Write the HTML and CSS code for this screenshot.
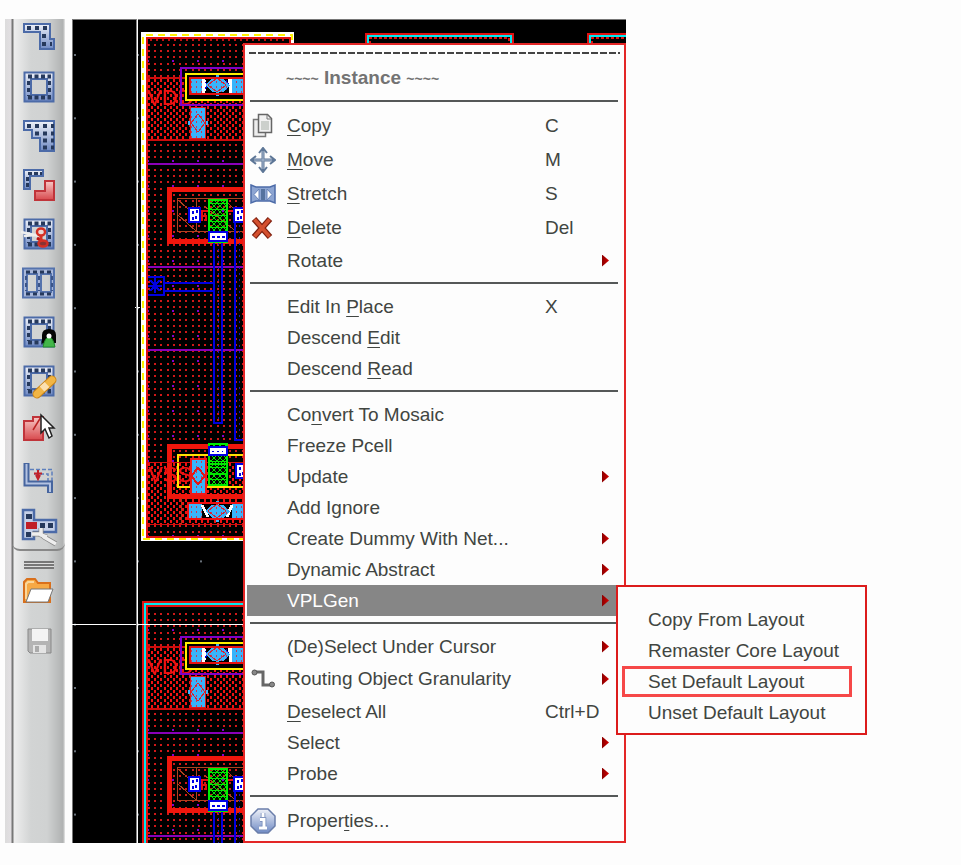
FILE: index.html
```html
<!DOCTYPE html>
<html lang="en">
<head>
<meta charset="utf-8">
<title>Layout Editor</title>
<link rel="stylesheet" href="styles.css">
</head>
<body>
<svg class="defs" aria-hidden="true">
  <defs>
    <linearGradient id="steel" x1="0" y1="0" x2="0" y2="1"><stop offset="0" stop-color="#eef1f8"/><stop offset="1" stop-color="#6f8ac4"/></linearGradient>
    <linearGradient id="rose" x1="0" y1="0" x2="0" y2="1"><stop offset="0" stop-color="#f7c9c6"/><stop offset="1" stop-color="#d8494d"/></linearGradient>
    <g id="ring">
      <path d="M1.500 1.500h29v29h-29zM8 8v16h16V8z" fill="url(#steel)" fill-rule="evenodd" stroke="#4c6ba8" stroke-width="2"/>
      <path d="M5 5.500h23M5 26.500h23" stroke="#26395c" stroke-width="4" stroke-dasharray="4 2.500"/>
      <path d="M5.500 10v15M26.500 10v15" stroke="#26395c" stroke-width="3" stroke-dasharray="4 3"/>
    </g>
  </defs>
</svg>
<main class="editor">
  <nav class="toolbar" aria-label="Layout tools">
    <div class="tools">
      <button class="tool" aria-label="Create path"><svg viewBox="0 0 32 32"><path d="M1 2h26v15h4v10H17V10H1z" fill="url(#steel)" stroke="#4c6ba8" stroke-width="2"/><path d="M4 6h22M19 14h4M19 22h10" stroke="#26395c" stroke-width="4" stroke-dasharray="4 4"/></svg></button>
      <button class="tool" aria-label="Create guard ring"><svg viewBox="0 0 32 32"><use href="#ring"/></svg></button>
      <button class="tool" aria-label="Create polygon"><svg viewBox="0 0 32 32"><path d="M1 1h30v30H17V18H9V10H1z" fill="url(#steel)" stroke="#4c6ba8" stroke-width="2"/><path d="M4 6h27M12 13.500h19M20 20.500h11M20 27.500h11" stroke="#26395c" stroke-width="4" stroke-dasharray="4 4"/></svg></button>
      <button class="tool" aria-label="Merge shapes"><svg viewBox="0 0 32 32"><path d="M1 1h19v6H7v13H1z" fill="url(#steel)" stroke="#4c6ba8" stroke-width="2"/><path d="M5 4.500h14M4.500 8v12" stroke="#26395c" stroke-width="3" stroke-dasharray="4 2"/><path d="M12 22h10V12h9v19H12z" fill="url(#rose)" stroke="#c0343a" stroke-width="2"/></svg></button>
      <button class="tool" aria-label="Chop"><svg viewBox="0 0 32 32"><use href="#ring"/><path d="M-2 14l18 4M1 18l12-1" stroke="#eee" stroke-width="2.500"/><path d="M14 20l5 3" stroke="#b11" stroke-width="3"/><ellipse cx="18" cy="14" rx="4" ry="3.500" fill="#ead9d6" stroke="#d43025" stroke-width="2.500"/><path d="M18 18v7" stroke="#d43025" stroke-width="3"/><ellipse cx="20" cy="25.500" rx="4.500" ry="3" fill="#833" stroke="#d43025" stroke-width="2.500"/></svg></button>
      <button class="tool" aria-label="Split"><svg viewBox="0 0 32 32"><path d="M0 1.500h31v29H0zM4 7v18h10V7zM18 7v18h10V7z" fill="#a9b8da" fill-rule="evenodd" stroke="#5573ad" stroke-width="2"/><path d="M3 5h27M3 27h27" stroke="#26395c" stroke-width="3" stroke-dasharray="4 3"/><path d="M3 9v15M16 9v15M29 9v15" stroke="#3c5588" stroke-width="2" stroke-dasharray="4 3"/></svg></button>
      <button class="tool" aria-label="Attach net"><svg viewBox="0 0 32 32"><use href="#ring"/><path d="M19 27V19q0-6 7-6t7 6v8z" fill="#050505"/><path d="M20 31q2-10 6-10t6 10z" fill="#43b649" stroke="#238a2c"/><circle cx="26" cy="20" r="2.500" fill="#fff"/></svg></button>
      <button class="tool" aria-label="Repair"><svg viewBox="0 0 32 32"><use href="#ring"/><path d="M14 29L29 15" stroke="#c98318" stroke-width="9" stroke-linecap="round"/><path d="M14 29L29 15" stroke="#f1b544" stroke-width="7" stroke-linecap="round"/><path d="M19 24l5-4.500" stroke="#fbe0b0" stroke-width="7"/></svg></button>
      <button class="tool" aria-label="Select shape"><svg viewBox="0 0 32 32"><path d="M1 7h9V3h10v23H1z" fill="url(#rose)" stroke="#c0343a" stroke-width="2"/><path d="M10 16L18 3" stroke="#b22" stroke-width="1.500"/><path d="M18 1v18l4-4 4 9 3-2-3-8h5z" fill="#fff" stroke="#222" stroke-width="1.500"/></svg></button>
      <button class="tool" aria-label="Move edge"><svg viewBox="0 0 32 32"><path d="M7 6.500h22V20M11 11h14v9" fill="none" stroke="#5d7fbd" stroke-width="1.500" stroke-dasharray="4 2"/><path d="M3.500 0v20.500H27V30" fill="none" stroke="#46659f" stroke-width="6"/><path d="M3.500 1v19.500H27V29" fill="none" stroke="#b4c3e2" stroke-width="2"/><path d="M15 7v8M11 10.500h8M13 12l2 4 2-4" stroke="#c2222a" stroke-width="2" fill="none"/></svg></button>
      <button class="tool" aria-label="Fix routing"><svg viewBox="0 0 32 32"><path d="M0-2h11V8h22v12H11v7H0z" fill="#c5d0e8" stroke="#4c6ba8" stroke-width="2.500"/><path d="M3 2h6v5H3zM3 20h5v5H3zM17 11h5v5h-5zM25 11h5v5h-5z" fill="#26395c"/><path d="M3 10h11v7H3z" fill="#c01f27"/><path d="M9 22h9l3 3 12 7M18 16v7l6 2" fill="none" stroke="#888" stroke-width="5"/><path d="M9 22h9l3 3 12 7M18 16v7l6 2" fill="none" stroke="#eee" stroke-width="3.500"/></svg></button>
    </div>
    <div class="files">
      <span class="grip"></span>
      <button class="tool" aria-label="Open"><svg viewBox="0 0 32 32"><path d="M1 27V7l3-3h8l3 4h12v19z" fill="#f6a945" stroke="#d9701c" stroke-width="2"/><path d="M3 24V9l2-2h6" fill="none" stroke="#fbd79a" stroke-width="2"/><path d="M8 14h22l-5 13H3z" fill="#fff" stroke="#777"/></svg></button>
      <button class="tool" aria-label="Save"><svg viewBox="0 0 32 32"><path d="M5 4h23v24H7l-2-2z" fill="#b4b4b4" stroke="#888"/><path d="M9 4h16v12H9z" fill="#f4f4f4"/><path d="M10 20h13v8H10z" fill="#e4e4e4"/><path d="M12 21h4v6h-4z" fill="#aaa"/></svg></button>
    </div>
  </nav>

  <section class="canvas" aria-label="Layout canvas">
    <svg class="artwork" viewBox="72 19 554 824" preserveAspectRatio="xMinYMin slice" shape-rendering="crispEdges">
      <defs>
        <pattern id="dots" x="148" y="44" width="25" height="25" patternUnits="userSpaceOnUse"><path d="M0 0h2v2H0zM6 0h2v2H6zM12 0h2v2h-2zM19 0h2v2h-2zM0 6h2v2H0zM6 6h2v2H6zM12 6h2v2h-2zM19 6h2v2h-2zM0 12h2v2H0zM6 12h2v2H6zM12 12h2v2h-2zM19 12h2v2h-2zM0 19h2v2H0zM6 19h2v2H6zM12 19h2v2h-2zM19 19h2v2h-2z" fill="#d01818"/></pattern>
        <pattern id="violet" x="147" y="60" width="25" height="25" patternUnits="userSpaceOnUse"><rect width="2" height="2" fill="#8200cc"/></pattern>
        <pattern id="dense" x="148" y="79" width="25" height="6" patternUnits="userSpaceOnUse"><path d="M0 0h2v3H0zM6 0h2v3H6zM12 0h2v3h-2zM19 0h2v3h-2zM3 3h2v3H3zM9 3h2v3H9zM16 3h2v3h-2zM22 3h2v3h-2z" fill="#f01212"/></pattern>
        <pattern id="speck" width="5" height="5" patternUnits="userSpaceOnUse"><rect width="5" height="5" fill="#38b4fb"/><rect x="1" y="1" width="1" height="2" fill="#c43a5a"/></pattern>
        <pattern id="mesh" x="208" y="200" width="6" height="6" patternUnits="userSpaceOnUse"><path d="M0 0l6 6M6 0L0 6M0 3h6" stroke="#00e800" stroke-width="1"/></pattern>
        <pattern id="stars" width="63" height="63.300" x="74" y="54" patternUnits="userSpaceOnUse"><rect width="2" height="2" fill="#69717a"/></pattern>
        <g id="contact"><rect x="189" y="208" width="11" height="14" fill="#fff" stroke="#0000e8" stroke-width="2"/><path d="M192 211h2v3h-2zM196 210h2v3h-2zM192 217h2v3h-2zM195 216h2v3h-2z" fill="#0000e8"/></g>
        <g id="diamond"><path d="M217 75v21" stroke="#38b4fb" stroke-width="3"/><path d="M205 85l7-6h11l7 6-7 7h-11z" fill="url(#speck)"/><path d="M208 85l9-7 9 7-9 7z" fill="none" stroke="#d82030"/></g>
        <g id="cell">
          <path d="M148 42h100v494H148z" fill="url(#dots)"/>
          <path d="M148 42h100v494H148z" fill="url(#violet)"/>
          <path d="M148 79h100v61H148z" fill="#000"/>
          <path d="M148 79h100v61H148z" fill="url(#dense)"/>
          <path d="M146 78h100M146 140h100" stroke="#cc0c0c" stroke-width="2"/>
          <path d="M148 164h96M148 267h96M148 350h96" stroke="#8a00b8" stroke-width="2"/>
          <text class="pin" x="147" y="105">VDD</text>
          <path d="M187 74h59v25h-59z" fill="#000"/>
          <path d="M246 68h-65v37h65" fill="none" stroke="#8000c8" stroke-width="2"/>
          <path d="M246 74h-60v26h60" fill="none" stroke="#ffef00" stroke-width="2"/>
          <path d="M191 79h12v14h-12zM232 79h14v14h-14z" fill="url(#speck)"/>
          <path d="M202 79h3l2 5-2 9h-3zM228 79h4v14h-3z" fill="#fff"/>
          <path d="M205 82l3 3-3 4M226 80l3 5-3 5" fill="none" stroke="#0000d8"/>
          <use href="#diamond"/>
          <path d="M246 78h-56v16h56" fill="none" stroke="#e60f0f" stroke-width="2"/>
          <path d="M188 123h20" stroke="#38b4fb" stroke-width="4"/>
          <path d="M190.500 107.500h15v31h-15z" fill="url(#speck)" stroke="#e01818"/>
          <path d="M198 114l7 9-7 9-7-9z" fill="none" stroke="#d82030"/>
          <path d="M246 189h-77v52h77" fill="none" stroke="#f0160c" stroke-width="5"/>
          <path d="M246 198.500h-68.500V231H246M196.500 199v32M178 200l19 17M178 215l18 16M204 206l34 27M226 201l18 18" fill="none" stroke="#b0421f"/>
          <path d="M202 221v-10h6M226 211h9v10M201 216h5v5" fill="none" stroke="#e60f0f" stroke-width="2"/>
          <path d="M209 200h18v42h-18z" fill="url(#mesh)" stroke="#00f000" stroke-width="2"/>
          <path d="M209 232h18v9h-18z" fill="#fff" stroke="#0000e8" stroke-width="2"/>
          <path d="M212 237h12v-3" fill="none" stroke="#0000e8" stroke-width="2" stroke-dasharray="3 2"/>
          <use href="#contact"/><use href="#contact" x="45"/>
          <path d="M214 243v180h8V243M235 223v217h9V223" fill="none" stroke="#0000e0" stroke-width="2"/>
          <path d="M218.500 243v178M239.500 225v213" stroke="#1818b8" stroke-dasharray="2 4"/>
          <path d="M164 283h50M164 291h50M147 277h17v18h-17M155 278v15M148 286h14M150 280l10 11M160 280l-10 11" fill="none" stroke="#0000e0" stroke-width="2"/>
          <path d="M148 463h98v61h-98z" fill="#000"/>
          <path d="M148 463h98v61h-98z" fill="url(#dense)"/>
          <text class="pin" x="148" y="482">VSS</text>
          <path d="M246 446h-77v50h77" fill="none" stroke="#f0160c" stroke-width="5"/>
          <path d="M246 455h-68v32h68" fill="none" stroke="#ffe000" stroke-width="2"/>
          <path d="M146 462.500h100M146 524.500h100" stroke="#d40c0c"/>
          <path d="M181.500 498v26" stroke="#a8381a"/>
          <path d="M191 459h15v35h-15z" fill="url(#speck)" stroke="#f01818" stroke-width="2"/>
          <path d="M198 468l7 8-7 8-7-8z" fill="none" stroke="#e01818" stroke-width="2"/>
          <path d="M209 444h18v41h-18z" fill="#000"/>
          <path d="M209 444h18v41h-18zM209 464h18M209 474h18" fill="url(#mesh)" stroke="#00e800" stroke-width="2"/>
          <path d="M209 447h18v8h-18z" fill="#fff" stroke="#0000e8" stroke-width="2"/>
          <path d="M212 451.500h11" stroke="#0000e8" stroke-dasharray="2 3"/>
          <use href="#contact" x="47" y="256"/>
          <path d="M188 504h58v15h-58z" fill="#000"/>
          <path d="M188 504h14v15h-14zM232 504h14v15h-14z" fill="url(#speck)"/>
          <path d="M202 505l6 12M227 517l5-12" stroke="#fff" stroke-width="3"/>
          <use href="#diamond" y="426"/>
          <path d="M246 503h-58v16h58" fill="none" stroke="#f01010" stroke-width="2"/>
        </g>
      </defs>
      <rect x="72" y="19" width="554" height="824"/>
      <rect x="72" y="19" width="172" height="824" fill="url(#stars)"/>
      <path d="M72.500 843V19.500H626" fill="none" stroke="#777"/>
      <path d="M141 32H294V45H288V38H146V536H246V541H141z" fill="#fff"/>
      <path d="M143 536V35H292V44M143 539H246" fill="none" stroke="#fff200" stroke-width="2" stroke-dasharray="7 5"/>
      <path d="M146 38h143v6H146zM146 38h100v499H146z" fill="#000"/>
      <use href="#cell"/>
      <path d="M246 537h-99V38H290v6" fill="none" stroke="#e01010" stroke-width="2"/>
      <path d="M150 40h137" stroke="#c01010" stroke-width="2" stroke-dasharray="2 4"/>
      <path d="M366 44V34H513V44M588 44V34H626" fill="none" stroke="#e01010" stroke-width="2"/>
      <path d="M368 44V36H511V44M590 44V36H626" fill="none" stroke="#00e8f0" stroke-width="2"/>
      <path d="M370 44V38H509V44M592 44V38H626" fill="none" stroke="#e01010" stroke-dasharray="3 2" stroke-width="2"/>
      <path d="M142 601h104v242H142z" fill="#000"/>
      <use href="#cell" y="569"/>
      <path d="M246 602H143V843" fill="none" stroke="#e01010" stroke-width="2"/>
      <path d="M246 604H145V843" fill="none" stroke="#00e8f0" stroke-width="2"/>
      <path d="M246 606H147V843" fill="none" stroke="#e01010" stroke-width="2"/>
      <path d="M137.500 19v824M72 624.500h172M135 307.500h5" stroke="#fff"/>
      <path d="M136.500 19v824" stroke="#888"/>
    </svg>

    <div class="menu">
      <hr class="tearoff">
      <h1 class="title"><span>~~~~</span> Instance <span>~~~~</span></h1>
      <hr>
      <ul>
        <li><button class="item tall"><svg class="icon" viewBox="0 0 26 26"><path d="M3.500 6.500h12v17h-12z" fill="#eee" stroke="#777" stroke-width="1.500"/><path d="M8.500 1.500h9l4 4v14h-13z" fill="#f2f2f2" stroke="#666" stroke-width="1.500"/><path d="M11 8h8v9h-8z" fill="#ccd0cc"/><path d="M17 2v4h4" fill="none" stroke="#777"/></svg><span><u>C</u>opy</span><kbd>C</kbd></button></li>
        <li><button class="item tall"><svg class="icon" viewBox="0 0 26 26"><path d="M13 2v22M2 13h22" stroke="#5e7797" stroke-width="3"/><path d="M9 6l4-5 4 5M9 20l4 5 4-5M6 9l-5 4 5 4M20 9l5 4-5 4" fill="none" stroke="#5e7797" stroke-width="2"/><path d="M13 4v18M4 13h18" stroke="#a9bbd2"/></svg><span><u>M</u>ove</span><kbd>M</kbd></button></li>
        <li><button class="item tall"><svg class="icon" viewBox="0 0 26 26"><path d="M1 4l5 2h14l5-2v18l-5-2H6l-5 2z" fill="#8da5d2" stroke="#4c6ba8" stroke-width="1.500"/><path d="M9 8v11l-5-5.500zM17 8v11l5-5.500z" fill="#fff" stroke="#6884ba"/><path d="M11 8h4v11h-4z" fill="#56739f"/></svg><span><u>S</u>tretch</span><kbd>S</kbd></button></li>
        <li><button class="item tall"><svg class="icon" viewBox="0 0 26 26"><path d="M4 4l16 18M20 4L4 22" stroke="#7e2010" stroke-width="6"/><path d="M4.500 4.500l15 17M19.500 4.500l-15 17" stroke="#d4502f" stroke-width="3.500"/></svg><span><u>D</u>elete</span><kbd>Del</kbd></button></li>
        <li><button class="item more"><span>Rotate</span></button></li>
      </ul>
      <hr>
      <ul>
        <li><button class="item"><span>Edit In <u>P</u>lace</span><kbd>X</kbd></button></li>
        <li><button class="item"><span>Descend <u>E</u>dit</span></button></li>
        <li><button class="item"><span>Descend <u>R</u>ead</span></button></li>
      </ul>
      <hr>
      <ul>
        <li><button class="item"><span>Co<u>n</u>vert To Mosaic</span></button></li>
        <li><button class="item"><span>Freeze Pcell</span></button></li>
        <li><button class="item more"><span>Update</span></button></li>
        <li><button class="item"><span>Add Ignore</span></button></li>
        <li><button class="item more"><span>Create Dummy With Net...</span></button></li>
        <li><button class="item more"><span>Dynamic Abstract</span></button></li>
        <li class="open"><button class="item more" aria-expanded="true"><span>VPLGen</span></button>
          <ul class="submenu">
            <li><button class="choice">Copy From Layout</button></li>
            <li><button class="choice">Remaster Core Layout</button></li>
            <li><button class="choice marked">Set Default Layout</button></li>
            <li><button class="choice">Unset Default Layout</button></li>
          </ul>
        </li>
      </ul>
      <hr>
      <ul>
        <li><button class="item more"><span>(De)Select Under Cursor</span></button></li>
        <li><button class="item tall more"><svg class="icon" viewBox="0 0 26 26"><path d="M4 6h9v13h10" fill="none" stroke="#666" stroke-width="3"/><circle cx="4.500" cy="6.500" r="2.500" fill="#888" stroke="#555"/><circle cx="22" cy="18.500" r="2.500" fill="#888" stroke="#555"/></svg><span>Routing Object Granularity</span></button></li>
        <li><button class="item"><span><u>D</u>eselect All</span><kbd>Ctrl+D</kbd></button></li>
        <li><button class="item more"><span>Select</span></button></li>
        <li><button class="item more"><span>Probe</span></button></li>
      </ul>
      <hr>
      <ul>
        <li><button class="item tall"><svg class="icon" viewBox="0 0 26 26"><path d="M8 1h10l7 7v10l-7 7H8l-7-7V8z" fill="url(#steel)" stroke="#6a7eaa" stroke-width="1.500"/><path d="M13 5v4M10 11.500h4v8M9 20h8" fill="none" stroke="#7186b5" stroke-width="4.500"/><path d="M13 5v4M10 11.500h4v8M9 20h8" fill="none" stroke="#fff" stroke-width="3"/></svg><span>Proper<u>t</u>ies...</span></button></li>
      </ul>
    </div>
  </section>
</main>
</body>
</html>
```
FILE: styles.css
```css
* { box-sizing: border-box; }

body {
  margin: 0;
  background: #fdfdfd;
  color: #414541;
  font: 19px/22px "Liberation Sans", Arial, sans-serif;
}

button {
  border: 0;
  padding: 0;
  background: none;
  color: inherit;
  font: inherit;
  text-align: left;
}

ul { list-style: none; margin: 0; padding: 0; }

.defs { position: absolute; width: 0; height: 0; }

.editor {
  display: flex;
  gap: 7px;
  align-items: stretch;
  padding: 19px 5px 22px;
}

/* Tool column */
.toolbar {
  display: flex;
  flex-direction: column;
  flex: none;
  width: 60px;
  padding-left: 7px;
  background: linear-gradient(90deg, #dcdcdc 0, #e2dfe2 6px, #777 7px, #777 8px, #eee 9px, #d2d4d4 26px, #d0d2d2 42px, #b0b2b2 58px, #e8e8e8 60px);
}

.tools, .files {
  display: flex;
  flex-direction: column;
  align-items: center;
}

.tools {
  gap: 17px;
  padding: 3px 0 5px;
  border-bottom: 2px solid #888;
  border-radius: 0 0 8px 8px;
}

.files { gap: 18px; padding-top: 10px; }

.tool { width: 32px; height: 32px; }
.tool svg { display: block; width: 100%; height: 100%; overflow: visible; }

.grip {
  width: 30px;
  height: 8px;
  margin-bottom: -12px;
  background: repeating-linear-gradient(#777 0 2px, #ddd 2px 3px);
}

/* Drawing area with the context menu over it */
.canvas {
  position: relative;
  display: flex;
  flex: none;
  padding: 24px 0 0 171px;
}

.artwork { position: absolute; inset: 0; width: 100%; height: 100%; }
.pin { font: 22px "Liberation Sans", sans-serif; fill: #f01212; }

.menu {
  position: relative;
  min-width: 383px;
  padding: 0 6px 3px 2px;
  border: 2px solid #e32626;
  background: #fdfdfd;
}

.menu hr {
  height: 2px;
  margin: 6px 0 7px 3px;
  border: 0;
  background: #555858;
}

.menu .tearoff {
  height: 2px;
  margin: 7px -2px 0 2px;
  background: repeating-linear-gradient(90deg, #444 0 7px, transparent 7px 9px);
}

.title {
  margin: 0;
  padding: 13px 0 4px 39px;
  color: #737373;
  font: bold 19px/22px "Liberation Sans", Arial, sans-serif;
}
.title span { font-size: 14px; }

.item {
  display: grid;
  grid-template-columns: 40px 258px 1fr;
  align-items: center;
  width: 100%;
  height: 31px;
  white-space: nowrap;
}
.item.tall { height: 34px; }
.item span { grid-column: 2; }
.item kbd { font: inherit; }

.item u { text-decoration-thickness: 1px; text-underline-offset: 3px; }

.icon { grid-row: 1; width: 26px; height: 26px; margin-left: 3px; }

.more::after {
  content: "";
  justify-self: end;
  width: 7px;
  height: 12px;
  margin-right: 9px;
  background: linear-gradient(90deg, #8a0000, #d40000);
  clip-path: polygon(0 0, 100% 50%, 0 100%);
}

.open { position: relative; background: #868686; color: #fff; }

.submenu {
  position: absolute;
  top: 0;
  left: 100%;
  width: 251px;
  margin-left: -2px;
  padding: 17px 13px 5px 4px;
  border: 2px solid #dc1c1c;
  background: #fdfdfd;
  color: #414541;
}

.choice {
  width: 100%;
  height: 31px;
  padding-left: 26px;
  white-space: nowrap;
}
.marked { padding-left: 23px; border: 3px solid #f64848; }
```
